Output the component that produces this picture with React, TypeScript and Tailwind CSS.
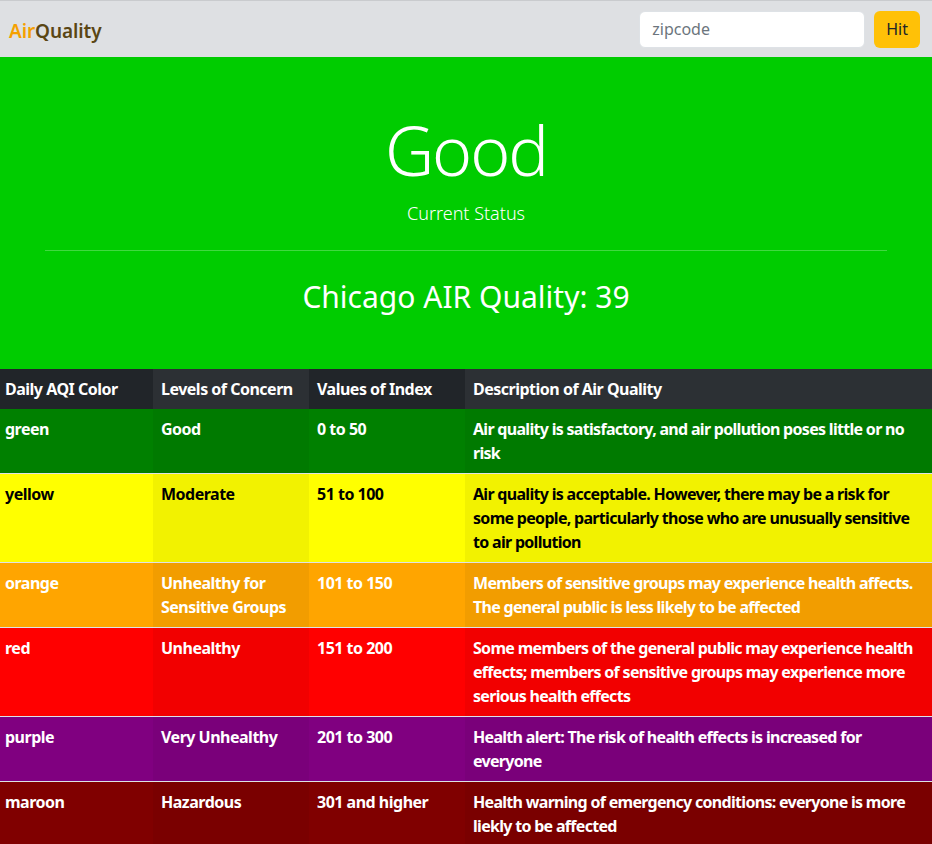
import React, { useState } from "react";

interface AqiRow {
    color: string;
    level: string;
    range: string;
    description: string;
    bg: string;
    bgAlt: string;
    text: string;
}

const rows: AqiRow[] = [
    {
        color: "green",
        level: "Good",
        range: "0 to 50",
        description: "Air quality is satisfactory, and air pollution poses little or no risk",
        bg: "bg-[#008000]",
        bgAlt: "bg-[#007a00]",
        text: "text-white",
    },
    {
        color: "yellow",
        level: "Moderate",
        range: "51 to 100",
        description:
            "Air quality is acceptable. However, there may be a risk for some people, particularly those who are unusually sensitive to air pollution",
        bg: "bg-[#ffff00]",
        bgAlt: "bg-[#f2f200]",
        text: "text-black",
    },
    {
        color: "orange",
        level: "Unhealthy for Sensitive Groups",
        range: "101 to 150",
        description:
            "Members of sensitive groups may experience health affects. The general public is less likely to be affected",
        bg: "bg-[#ffa500]",
        bgAlt: "bg-[#f29d00]",
        text: "text-white",
    },
    {
        color: "red",
        level: "Unhealthy",
        range: "151 to 200",
        description:
            "Some members of the general public may experience health effects; members of sensitive groups may experience more serious health effects",
        bg: "bg-[#ff0000]",
        bgAlt: "bg-[#f20000]",
        text: "text-white",
    },
    {
        color: "purple",
        level: "Very Unhealthy",
        range: "201 to 300",
        description: "Health alert: The risk of health effects is increased for everyone",
        bg: "bg-[#800080]",
        bgAlt: "bg-[#7a007a]",
        text: "text-white",
    },
    {
        color: "maroon",
        level: "Hazardous",
        range: "301 and higher",
        description:
            "Health warning of emergency conditions: everyone is more liekly to be affected",
        bg: "bg-[#800000]",
        bgAlt: "bg-[#7a0000]",
        text: "text-white",
    },
];

const App = () => {
    const [zipcode, setZipcode] = useState("");

    return (
        <div className="min-h-screen bg-white font-['Noto_Sans','Liberation_Sans',sans-serif] text-[#212529]">
            {/* navbar */}
            <nav className="flex h-[57px] items-center justify-between border-t border-[#c9cbce] bg-[#dee0e3] pl-[9px] pr-[12px]">
                <a className="mt-[5px] text-[19px] font-semibold leading-none tracking-[-0.1px]">
                    <span className="text-[#f5a000]">Air</span>
                    <span className="text-[#5a4614]">Quality</span>
                </a>
                <form className="flex items-center gap-[9px]" onSubmit={(e) => e.preventDefault()}>
                    <input
                        value={zipcode}
                        onChange={(e) => setZipcode(e.target.value)}
                        placeholder="zipcode"
                        className="h-[37px] w-[226px] rounded-[6px] border border-[#dee2e6] bg-white px-3 text-[16px] outline-none placeholder:text-[#6c757d]"
                    />
                    <button className="h-[37px] rounded-[6px] bg-[#ffc107] px-3 text-[16px] text-[#212529]">
                        Hit
                    </button>
                </form>
            </nav>

            {/* status */}
            <div className="flex h-[312px] flex-col items-center bg-[#00cc00] px-[45px] pt-[52px] text-white">
                <h1 className="text-[68px] font-light leading-[1.2] tracking-[-2px]">Good</h1>
                <p className="mt-[9px] text-[18px] font-light leading-[1.5]">Current Status</p>
                <hr className="mt-[23px] w-full border-t border-white/25" />
                <h2 className="mt-[28px] text-[30px] leading-[1.2]">Chicago AIR Quality: 39</h2>
            </div>

            {/* aqi table */}
            <table className="w-full table-fixed border-collapse text-[16px] font-bold leading-[24px] tracking-[-0.5px]">
                <colgroup>
                    <col className="w-[153px]" />
                    <col className="w-[156px]" />
                    <col className="w-[156px]" />
                    <col />
                </colgroup>
                <thead>
                    <tr className="text-left text-white">
                        <th className="bg-[#212529] py-2 pl-[5px] pr-2">Daily AQI Color</th>
                        <th className="bg-[#2c3034] px-2 py-2">Levels of Concern</th>
                        <th className="bg-[#212529] px-2 py-2">Values of Index</th>
                        <th className="bg-[#2c3034] px-2 py-2">Description of Air Quality</th>
                    </tr>
                </thead>
                <tbody>
                    {rows.map((row) => (
                        <tr key={row.color} className={`${row.text} border-b border-[#dee2e6] align-top`}>
                            <td className={`${row.bg} py-2 pl-[5px] pr-2`}>{row.color}</td>
                            <td className={`${row.bgAlt} px-2 py-2`}>{row.level}</td>
                            <td className={`${row.bg} px-2 py-2`}>{row.range}</td>
                            <td className={`${row.bgAlt} px-2 py-2 tracking-[-0.7px]`}>{row.description}</td>
                        </tr>
                    ))}
                </tbody>
            </table>
        </div>
    );
};

export default App;
